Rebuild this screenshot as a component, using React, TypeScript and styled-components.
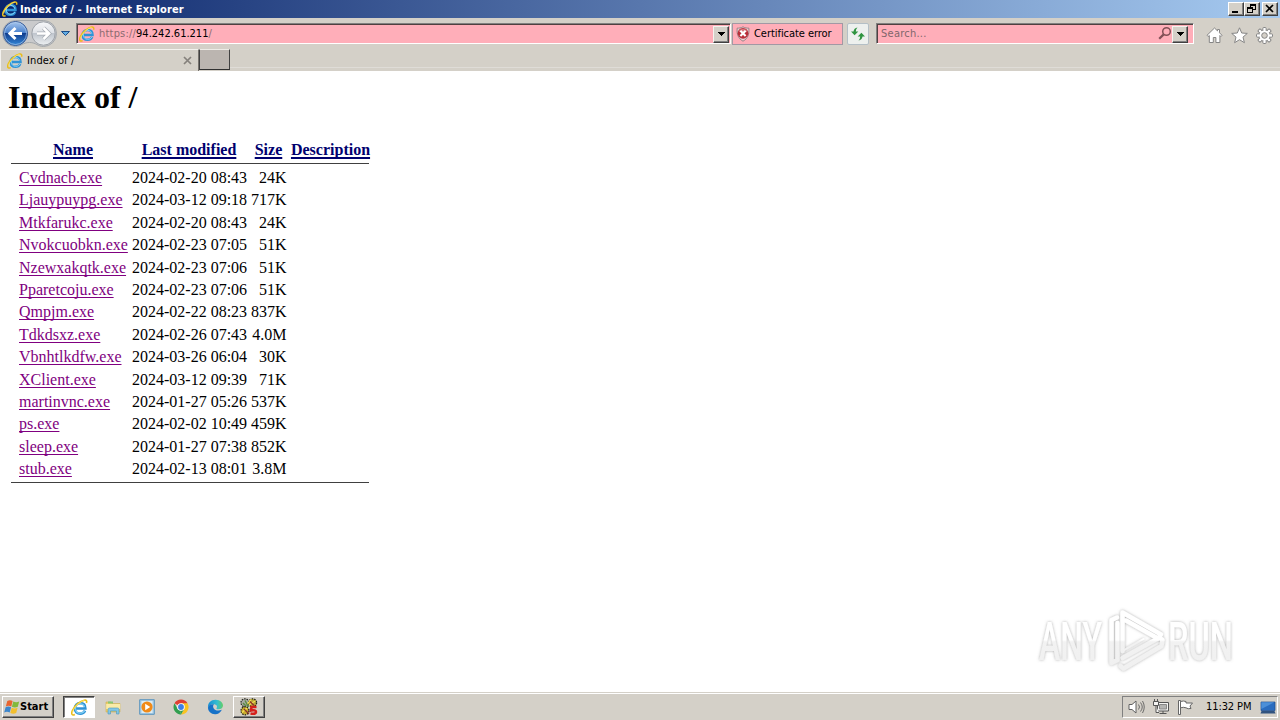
import React from "react";
import styled, { createGlobalStyle } from "styled-components";

const Global = createGlobalStyle`
  html, body { margin: 0; padding: 0; overflow: hidden; }
  *, *::before { box-sizing: border-box; }
`;

const Screen = styled.div`
  width: 1280px;
  height: 720px;
  display: flex;
  flex-direction: column;
  background: #d4d0c8;
  color: #000;
  font: 11px/14px "DejaVu Sans Condensed", "DejaVu Sans", sans-serif;
  white-space: nowrap;
  svg { display: block; flex: none; }
`;

const Label = styled.span<{ $track?: number; $color?: string; $bold?: boolean }>`
  letter-spacing: ${(p) => p.$track ?? 0}px;
  color: ${(p) => p.$color ?? "inherit"};
  font-weight: ${(p) => (p.$bold ? 700 : 400)};
`;

const TitleBar = styled.header`
  height: 18px;
  flex: none;
  display: flex;
  align-items: center;
  padding: 0 2px 0 2px;
  color: #fff;
  background: linear-gradient(90deg, #0a246a, #a6caf0);
`;

const Caption = styled.div`
  margin-left: 2px;
  padding-top: 1px;
  flex: 1;
`;

const CaptionButton = styled.button<{ $gap?: number }>`
  width: 16px;
  height: 14px;
  margin: 0 0 0 ${(p) => p.$gap ?? 0}px;
  padding: 0;
  background: #d4d0c8;
  border: 1px solid;
  border-color: #fff #404040 #404040 #fff;
  box-shadow: inset -1px -1px #808080;
`;

const NavBar = styled.nav`
  height: 31px;
  flex: none;
  display: flex;
  align-items: center;
  padding-left: 2px;
`;

const Field = styled.div<{ $w: number; $gap: number; $end?: number }>`
  width: ${(p) => p.$w}px;
  height: 21px;
  margin-left: ${(p) => p.$gap}px;
  display: flex;
  align-items: center;
  padding-right: ${(p) => p.$end ?? 1}px;
  background: #ffaeb9;
  border: 1px solid;
  border-color: #808080 #fff #fff #808080;
  box-shadow: inset 1px 1px #504040;
`;

const FieldText = styled.div<{ $left: number }>`
  flex: 1;
  padding-left: ${(p) => p.$left}px;
`;

const Address = styled.div`
  display: flex;
  align-items: center;
  gap: 4px;
`;

const DropButton = styled.button`
  width: 16px;
  height: 17px;
  margin-top: 1px;
  padding: 0;
  display: grid;
  place-items: center;
  background: #d4d0c8;
  border: 1px solid;
  border-color: #f4f2ee #404040 #404040 #f4f2ee;
  box-shadow: inset -1px -1px #808080;
`;

const CertBox = styled.div`
  width: 111px;
  height: 22px;
  margin-left: 1px;
  padding-left: 3px;
  display: flex;
  align-items: center;
  gap: 4px;
  background: #ffaeb9;
  border: 1px solid #a298a4;
`;

const Refresh = styled.button`
  width: 22px;
  height: 22px;
  margin: 0 0 0 4px;
  padding: 0;
  display: grid;
  place-items: center;
  background: #edf0ee;
  border: 1px solid #b4bfc6;
  border-radius: 2px;
`;

const Tools = styled.div`
  display: flex;
  gap: 8px;
  margin: 3px 0 0 12px;
`;

const TabStrip = styled.div`
  height: 22px;
  flex: none;
  display: flex;
  align-items: flex-start;
  background: linear-gradient(#dfdcd7, #dfdcd7) 0 18px / 100% 1px no-repeat;
`;

const Tab = styled.div`
  width: 199px;
  height: 22px;
  display: flex;
  align-items: center;
  gap: 4px;
  padding: 0 6px 0 6px;
  background: #d4d0c8;
  border-top: 1px solid #f4f2ee;
  border-left: 1px solid #f4f2ee;
  border-right: 1px solid #77736e;
`;

const TabTitle = styled.div`
  flex: 1;
`;

const NewTab = styled.div`
  width: 31px;
  height: 21px;
  background: #bbb5b0;
  border: 1px solid;
  border-color: #eeebe6 #404040 #303030 #404040;
`;

const Page = styled.main`
  height: 621px;
  flex: none;
  position: relative;
  padding: 8px 8px 0;
  background: #fff;
  font: 16px/22px "Liberation Serif", serif;
`;

const Heading = styled.h1`
  margin: 0;
  font-size: 32px;
  line-height: 36px;
  letter-spacing: -0.05px;
`;

const Listing = styled.section`
  width: 358px;
  margin: 24px 0 0 3px;
`;

const Head = styled.div`
  height: 24px;
  display: grid;
  grid-template-columns: 124px 108px 51px 73px;
  justify-items: center;
  align-items: start;
  font-weight: 700;
`;

const HeadLink = styled.a`
  color: #00006e;
  text-decoration: underline;
  text-decoration-thickness: 2px;
  text-decoration-skip-ink: none;
  text-underline-offset: 2px;
`;

const Rule = styled.div`
  height: 1px;
  background: #404040;
`;

const Rows = styled.div`
  padding: 3.1px 0 1.3px;
`;

const Row = styled.div`
  height: 22.4px;
  display: grid;
  grid-template-columns: 113px 115.500px 39px;
  padding-left: 8px;
`;

const FileLink = styled.a`
  color: #800080;
  text-decoration: underline;
  text-decoration-thickness: 1px;
  text-decoration-skip-ink: none;
  text-underline-offset: 2px;
`;

const Size = styled.span`
  text-align: right;
`;

const Watermark = styled.div`
  position: absolute;
  left: 1025px;
  top: 529px;
`;

const Taskbar = styled.footer`
  height: 28px;
  flex: none;
  display: flex;
  align-items: flex-start;
  padding: 4px 2px 0;
  background: #d4d0c8;
  box-shadow: inset 0 1px #d4d0c8, inset 0 2px #fff;
`;

const StartButton = styled.button`
  width: 52px;
  height: 22px;
  padding: 0 0 0 1px;
  display: flex;
  align-items: center;
  gap: 0;
  font: inherit;
  color: #000;
  background: #d4d0c8;
  border: 1px solid;
  border-color: #fff #404040 #404040 #fff;
  box-shadow: inset -1px -1px #808080;
`;

const Task = styled.div<{ $w: number; $gap?: number; $look?: "pressed" | "raised" }>`
  width: ${(p) => p.$w}px;
  height: 22px;
  margin-left: ${(p) => p.$gap ?? 0}px;
  display: grid;
  place-items: center;
  border: 1px solid transparent;
  ${(p) => p.$look === "pressed" && "background:#fff;border-color:#404040 #fff #fff #404040;box-shadow:inset 1px 1px #808080;"}
  ${(p) => p.$look === "raised" && "border-color:#fff #404040 #404040 #fff;box-shadow:inset -1px -1px #808080;"}
`;

const Tray = styled.div`
  width: 156px;
  height: 22px;
  margin-left: auto;
  padding: 0 1px 0 5px;
  display: flex;
  align-items: center;
  border: 1px solid;
  border-color: #808080 #fff #fff #808080;
`;

const TrayIcons = styled.div`
  display: flex;
  gap: 8px;
  margin-right: 12px;
`;

const Clock = styled.div`
  flex: 1;
`;

const IeIcon = ({ size = 16 }: { size?: number }) => (
  <svg width={size} height={size} viewBox="0 0 16 16" fill="none">
    <path d="M13.200 11C12.300 12.900 10.800 13.800 8.700 13.800 5.700 13.800 3.700 11.900 3.700 8.900c0-3 2-5 5-5 2.900 0 4.800 1.900 4.800 5H4.800" stroke="#2f93d6" strokeWidth="2.500" />
    <path d="M13 10.800c-1 1.800-2.400 2.500-4.300 2.500-2.700 0-4.400-1.700-4.400-4.400 0-2.700 1.800-4.500 4.400-4.500 2.100 0 3.700 1.200 4.100 3.300" stroke="#86d2f5" strokeWidth="1" />
    <path d="M3.600 14.600C.7 16 0 13.800 1.400 10.600 3.200 6.500 8.400 1.900 12.500 1.100c2-.4 2.700.8 2 2.600" stroke="#e9bd1c" strokeWidth="1.500" />
    <path d="M1.700 12.500C2.200 8.300 8 2.500 12.700 1.300" stroke="#fdec72" strokeWidth=".8" />
  </svg>
);

const Arrow = () => (
  <svg width="7" height="4" viewBox="0 0 7 4" shapeRendering="crispEdges"><path d="M0 0h7L3.500 4z" /></svg>
);

const NavButtons = () => (
  <svg width="69" height="29" viewBox="0 0 69 29">
    <defs>
      <linearGradient id="back" x2="0" y2="1"><stop stopColor="#a9c7ee" /><stop offset=".46" stopColor="#4b83ce" /><stop offset=".5" stopColor="#103d8e" /><stop offset="1" stopColor="#3588d8" /></linearGradient>
      <linearGradient id="fwd" x2="0" y2="1"><stop stopColor="#f7f8fa" /><stop offset=".46" stopColor="#dfe2e7" /><stop offset=".5" stopColor="#bfc5cd" /><stop offset="1" stopColor="#edf0f2" /></linearGradient>
    </defs>
    <path d="M13.500 1.500h28a13 13 0 0 1 0 26c-6 0-7-4-14-4s-8 4-14 4a13 13 0 0 1 0-26z" fill="#c9cacc" stroke="#a4a8ac" />
    <circle cx="13.500" cy="14.500" r="12" fill="url(#back)" stroke="#385c98" />
    <circle cx="13.500" cy="14.500" r="11" fill="none" stroke="#b4d0ef" strokeOpacity=".65" />
    <circle cx="41.500" cy="14.500" r="11.700" fill="url(#fwd)" stroke="#9ca1a8" />
    <path d="M20 14.500H9M13.500 9l-5.600 5.500 5.600 5.500" fill="none" stroke="#fff" strokeWidth="3" />
    <path d="M35 14.500h11M41.500 9l5.600 5.500-5.600 5.500" fill="none" stroke="#a6abb3" strokeWidth="4" />
    <path d="M35 14.500h11M41.500 9l5.600 5.500-5.600 5.500" fill="none" stroke="#fff" strokeWidth="2.600" />
    <path d="M59.500 12.500h8l-4 4z" fill="#62aee5" stroke="#1d4e88" />
  </svg>
);

const Shield = () => (
  <svg width="14" height="16" viewBox="0 0 14 16">
    <path d="M7 .8c2 1.200 4 1.400 5.800 1.300C13.400 8 12 12.500 7 15.200 2 12.500.6 8 1.200 2.100 3 2.200 5 2 7 .8z" fill="#ead3d5" stroke="#9a8186" />
    <circle cx="7" cy="7.300" r="5.400" fill="#b92f3a" />
    <path d="M2.500 5.500a5 5 0 0 1 9 0Q7 7 2.500 5.500z" fill="#d8767d" />
    <path d="m4.400 4.700 5.200 5.200m0-5.200-5.200 5.200" stroke="#fff" strokeWidth="2.100" />
  </svg>
);

const RefreshIcon = () => (
  <svg width="16" height="16" viewBox="0 0 16 16" fill="#2f9440">
    <path d="M7.500 1.500Q4 2 3.500 5.500H1L4.600 9.300 8.300 5.500H5.800Q5.800 3.200 7.500 1.500z" />
    <path d="M8.500 14.500q3.500-.5 4-4H15l-3.600-3.800L7.700 10.500h2.500q0 2.300-1.700 4z" />
  </svg>
);

const Magnifier = () => (
  <svg width="14" height="15" viewBox="0 0 14 15" fill="none" stroke="#825056">
    <circle cx="8.500" cy="5.500" r="3.800" strokeWidth="1.500" /><path d="m5.700 8.400-4.500 4.400" strokeWidth="2.200" />
  </svg>
);

const gearTeeth = Array.from({ length: 8 }, (_, i) => i * 45);

const ToolIcons = () => (
  <Tools>
    <svg width="17" height="17" viewBox="0 0 17 17" fill="#fff" stroke="#858585" strokeLinejoin="round">
      <path d="M8.500 1 1 8.300l1.200 1.200 1.100-1v7h4v-5h2.600v5h4v-7l1 1L16 8.300l-2.500-2.500V2.500h-2v1.400z" />
    </svg>
    <svg width="17" height="17" viewBox="0 0 17 17" fill="#fff" stroke="#858585">
      <path d="m8.500.8 2.200 5.200 5.600.4-4.300 3.700 1.400 5.600-4.900-3-4.900 3L5 10.100.7 6.400 6.300 6z" />
    </svg>
    <svg width="17" height="17" viewBox="0 0 17 17">
      {gearTeeth.map((a) => <rect key={a} x="6.900" y=".5" width="3.200" height="5" rx=".7" fill="#fff" stroke="#858585" transform={`rotate(${a} 8.500 8.500)`} />)}
      <circle cx="8.500" cy="8.500" r="5.600" fill="#fff" stroke="#858585" />
      {gearTeeth.map((a) => <rect key={a} x="7.500" y="2" width="2" height="3" fill="#fff" transform={`rotate(${a} 8.500 8.500)`} />)}
      <circle cx="8.500" cy="8.500" r="2.800" fill="#d4d0c8" stroke="#858585" />
    </svg>
  </Tools>
);

const Logo = () => (
  <svg width="255" height="86" viewBox="1025 600 255 86">
    <defs>
      <linearGradient id="wm" gradientUnits="userSpaceOnUse" x1="0" y1="610" x2="0" y2="670">
        <stop stopColor="#fff" /><stop offset=".5" stopColor="#fff" /><stop offset=".53" stopColor="#f2f2f2" /><stop offset="1" stopColor="#f0f0f0" />
      </linearGradient>
      <filter id="glow" x="-10%" y="-20%" width="120%" height="140%"><feDropShadow dx="0" dy="0" stdDeviation="1.800" floodColor="#777" floodOpacity=".6" /></filter>
    </defs>
    <g filter="url(#glow)" fill="url(#wm)" fontFamily="Roboto, sans-serif" fontSize="53" fontWeight="500">
      <text x="1039" y="660" textLength="63" lengthAdjust="spacingAndGlyphs">ANY</text>
      <text x="1168" y="660" textLength="65" lengthAdjust="spacingAndGlyphs">RUN</text>
      <g fill="none" stroke="url(#wm)" strokeWidth="4.500" strokeLinejoin="round" strokeLinecap="round">
        <path d="M1122.500 651v-38.500l38.500 22-3 4-32-18" />
        <path d="M1117 617.500l-5.500 2.500v43l6-3v-37" />
        <path d="m1122.500 658 37-20.500 3 2.500-1 6-38 22.500-3-2.500" />
        <path d="m1122.500 651 21-12" strokeWidth="2" />
      </g>
    </g>
  </svg>
);

const WindowsFlag = () => (
  <svg width="16" height="16" viewBox="0 0 16 16">
    <path d="M3.300 2Q6 .5 8.600 2L7.300 7.400q-2.800-1.500-5.500 0z" fill="#e86530" />
    <path d="M9.300 2.500q2.900 1.500 5.900 0l-1.400 5.300q-2.900 1.500-5.900 0z" fill="#82b93c" />
    <path d="M1.600 8.200q2.700-1.500 5.500 0L5.700 13.600q-2.700-1.500-5.500 0z" fill="#3c86cc" />
    <path d="M7.700 8.700q2.900 1.500 5.900 0l-1.400 5.300q-2.900 1.500-5.900 0z" fill="#f3bf2d" />
  </svg>
);

const FolderIcon = () => (
  <svg width="17" height="16" viewBox="0 0 17 16">
    <path d="M1 3h5l1 1.500h8V13H1z" fill="#ecce69" stroke="#cdae56" strokeWidth=".6" />
    <path d="M3 2.500h5v2H3z" fill="#87c773" /><path d="M1.200 5h14v5h-14z" fill="#faeba7" />
    <path d="M3 15v-4.500Q3 9 4.500 9h8q1.500 0 1.500 1.500V15h-2.500v-3h-6v3z" fill="#82c6e5" stroke="#4c97bd" strokeWidth=".6" />
  </svg>
);

const MediaIcon = () => (
  <svg width="16" height="16" viewBox="0 0 16 16">
    <path d="M.7.7h14.600v14.600H.7z" fill="#a8cde8" stroke="#5b94bd" /><path d="M2.500 2h11v12h-11z" fill="#dcecf4" />
    <circle cx="8" cy="8" r="5.600" fill="#f08a19" /><path d="m6.200 4.700 5 3.300-5 3.300z" fill="#fff" />
  </svg>
);

const ChromeIcon = () => (
  <svg width="16" height="16" viewBox="0 0 16 16">
    <path d="M8 8 1.500 4.200a7.500 7.500 0 0 1 13 0z" fill="#df4034" /><path d="M8 8V4.200h6.500A7.500 7.500 0 0 1 8 15.500l3.300-5.600z" fill="#f9c320" />
    <path d="M1.500 4.200 4.700 9.900 8 11.800l-1 3.600A7.500 7.500 0 0 1 1.500 4.200z" fill="#319e4f" /><path d="m8 11.500 3-1.300L8 15.500H7z" fill="#319e4f" />
    <circle cx="8" cy="8" r="3.800" fill="#fff" /><circle cx="8" cy="8" r="2.900" fill="#3e80e7" />
  </svg>
);

const EdgeIcon = () => (
  <svg width="17" height="16" viewBox="0 0 17 16">
    <defs><linearGradient id="edge"><stop stopColor="#168ed4" /><stop offset=".6" stopColor="#35bdd0" /><stop offset="1" stopColor="#64cf65" /></linearGradient></defs>
    <path d="M1 9C.5 3.700 4 .7 8.500.7c5 0 7.700 3.300 7.500 6.100-.2 2.500-2.300 3.500-4.500 3.500-1.800 0-2.500-.7-1.800-1.600 1.100-1.800-.7-3.500-3.200-3.500C4 5.200 2 6.400 1 9z" fill="url(#edge)" />
    <path d="M1 8.500C2 6 4 5 7 5.200 5.700 6.200 6 8 6.600 9.200c1.200 2.200 4.600 3.100 8.300 1.600C13 14.200 10.500 15.500 8 15.300 4 15.100 1 12.500 1 8.500z" fill="#1672c8" />
  </svg>
);

const GearsIcon = () => (
  <svg width="18" height="18" viewBox="0 0 18 18">
    <g stroke="#26261c" strokeWidth="1.300" strokeDasharray="1.500 1">
      <circle cx="5" cy="4.800" r="4" fill="#a9aba6" /><circle cx="12.600" cy="4.800" r="4" fill="#b9a836" />
      <circle cx="5" cy="12.800" r="4" fill="#c9ad2c" />
    </g>
    <path d="M9 7q4-3 6.500-4M2 14.500l5-4.500M11 1.500l-4 5" stroke="#f5df55" strokeWidth="1.300" fill="none" />
    <path d="M5 2.500 8.500 9M3 5l3 3" stroke="#5c8a44" strokeWidth="1.500" />
    <path d="m4 11 5 5M10 3.500l4 4" stroke="#8d332a" strokeWidth="1.400" />
    <path d="M16.500 9h-5l-.5 3.500q5-1 5 1.500t-5.500 1.500" stroke="#d5201c" strokeWidth="2.600" fill="none" />
  </svg>
);

const files: [string, string, string][] = [
  ["Cvdnacb.exe", "2024-02-20 08:43", "24K"],
  ["Ljauypuypg.exe", "2024-03-12 09:18", "717K"],
  ["Mtkfarukc.exe", "2024-02-20 08:43", "24K"],
  ["Nvokcuobkn.exe", "2024-02-23 07:05", "51K"],
  ["Nzewxakqtk.exe", "2024-02-23 07:06", "51K"],
  ["Pparetcoju.exe", "2024-02-23 07:06", "51K"],
  ["Qmpjm.exe", "2024-02-22 08:23", "837K"],
  ["Tdkdsxz.exe", "2024-02-26 07:43", "4.0M"],
  ["Vbnhtlkdfw.exe", "2024-03-26 06:04", "30K"],
  ["XClient.exe", "2024-03-12 09:39", "71K"],
  ["martinvnc.exe", "2024-01-27 05:26", "537K"],
  ["ps.exe", "2024-02-02 10:49", "459K"],
  ["sleep.exe", "2024-01-27 07:38", "852K"],
  ["stub.exe", "2024-02-13 08:01", "3.8M"],
];

export default function App() {
  return (
    <Screen>
      <Global />
      <TitleBar>
        <IeIcon />
        <Caption><Label $bold $track={0.15}>Index of / - Internet Explorer</Label></Caption>
        <CaptionButton><svg width="14" height="12" shapeRendering="crispEdges"><path d="M3 8h6v2H3z" /></svg></CaptionButton>
        <CaptionButton><svg width="14" height="12" fill="none" stroke="#000" shapeRendering="crispEdges"><path d="M5.500 4V1.500h5v5H8M5 2h6M2.500 4.500h5v5h-5zM2 5h6" /></svg></CaptionButton>
        <CaptionButton $gap={2}><svg width="14" height="12" stroke="#000"><path d="m3 2 7 7m0-7-7 7" strokeWidth="1.700" /></svg></CaptionButton>
      </TitleBar>
      <NavBar>
        <NavButtons />
        <Field $w={655} $gap={5}>
          <FieldText $left={2}>
            <Address>
              <IeIcon />
              <span><Label $color="#8b6b70" $track={0.2}>https://</Label><Label>94.242.61.211</Label><Label $color="#8b6b70">/</Label></span>
            </Address>
          </FieldText>
          <DropButton><Arrow /></DropButton>
        </Field>
        <CertBox><Shield /><Label $track={-0.05}>Certificate error</Label></CertBox>
        <Refresh><RefreshIcon /></Refresh>
        <Field $w={318} $gap={7} $end={5}>
          <FieldText $left={4}><Label $color="#80666b" $track={0.25}>Search...</Label></FieldText>
          <Magnifier />
          <DropButton><Arrow /></DropButton>
        </Field>
        <ToolIcons />
      </NavBar>
      <TabStrip>
        <Tab>
          <IeIcon />
          <TabTitle><Label $track={0.1}>Index of /</Label></TabTitle>
          <svg width="9" height="9" viewBox="0 0 9 9" stroke="#85817c" strokeWidth="1.700"><path d="m1 1 7 7m0-7-7 7" /></svg>
        </Tab>
        <NewTab />
      </TabStrip>
      <Page>
        <Heading>Index of /</Heading>
        <Listing>
          <Head>
            <HeadLink>Name</HeadLink>
            <HeadLink>Last modified</HeadLink>
            <HeadLink>Size</HeadLink>
            <HeadLink>Description</HeadLink>
          </Head>
          <Rule />
          <Rows>
            {files.map(([name, date, size]) => (
              <Row key={name}><span><FileLink>{name}</FileLink></span><span>{date}</span><Size>{size}</Size></Row>
            ))}
          </Rows>
          <Rule />
        </Listing>
        <Watermark><Logo /></Watermark>
      </Page>
      <Taskbar>
        <StartButton><WindowsFlag /><Label $bold>Start</Label></StartButton>
        <Task $w={32} $gap={9} $look="pressed"><IeIcon size={17} /></Task>
        <Task $w={34} $gap={1}><FolderIcon /></Task>
        <Task $w={34}><MediaIcon /></Task>
        <Task $w={34}><ChromeIcon /></Task>
        <Task $w={34}><EdgeIcon /></Task>
        <Task $w={32} $gap={1} $look="raised"><GearsIcon /></Task>
        <Tray>
          <TrayIcons>
            <svg width="17" height="16" viewBox="0 0 17 16" fill="#fff" stroke="#606060">
              <path d="M1 5.500h3L8 2v12l-4-3.500H1z" /><path d="M10.500 5.500q2 2.500 0 5M12.500 3.500q3.500 4.500 0 9M14.500 2q3.500 6 0 12" fill="none" strokeWidth=".9" />
            </svg>
            <svg width="16" height="16" viewBox="0 0 16 16" fill="#f4f4f2" stroke="#555">
              <path d="M4.500 3.500h11v8.500h-11z" /><path d="M6.500 5.500h7v4.500h-7z" fill="#b4b4b2" stroke="#888" /><path d="M6.500 14.500h7M10 12v2" /><path d="M.5 2.500h5v4h-5zM3 7v6.500h3M1.500 0v2m3-2v2" />
            </svg>
            <svg width="17" height="16" viewBox="0 0 17 16" fill="#fff" stroke="#666">
              <path d="M1.500 1.500h2v14h-2z" /><path d="M3.500 2.500q3-1 5.500 0v1.500h6.500l-2.500 3 1 2.500q-3 .8-5-.7-2.500-1-5.500 0z" />
            </svg>
          </TrayIcons>
          <Clock><Label $track={-0.1}>11:32 PM</Label></Clock>
          <svg width="16" height="15" viewBox="0 0 16 15">
            <path d="M1 2h14v8.500H1z" fill="#2a6cbf" stroke="#1b4b8e" strokeWidth=".7" /><path d="M1.300 2.300h13L1.300 9z" fill="#4c8fd8" /><path d="M1.500 11h13l1 2.500H.5z" fill="#31537f" />
          </svg>
        </Tray>
      </Taskbar>
    </Screen>
  );
}
